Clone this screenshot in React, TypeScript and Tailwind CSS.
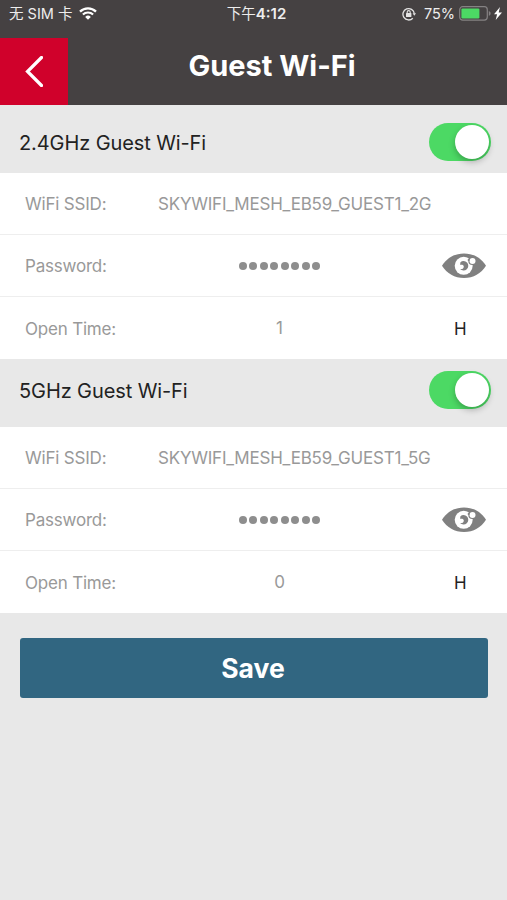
import { ReactNode } from "react";

interface Network {
  title: string;
  ssid: string;
  openTime: string;
  headerPadding: string;
}

const networks: Network[] = [
  {
    title: "2.4GHz Guest Wi-Fi",
    ssid: "SKYWIFI_MESH_EB59_GUEST1_2G",
    openTime: "1",
    headerPadding: "pt-[6px]",
  },
  {
    title: "5GHz Guest Wi-Fi",
    ssid: "SKYWIFI_MESH_EB59_GUEST1_5G",
    openTime: "0",
    headerPadding: "pb-[6px]",
  },
];

function WifiIcon() {
  return (
    <svg width="18" height="13" viewBox="0 0 18 13" fill="none" stroke="#fff">
      <path d="M1 4.6a11.4 11.4 0 0 1 16 0" strokeWidth="2.3" />
      <path d="M3.9 7.6a7.2 7.2 0 0 1 10.2 0" strokeWidth="2.1" />
      <path d="M9 12.8 6.2 9.9a4 4 0 0 1 5.6 0z" fill="#fff" stroke="none" />
    </svg>
  );
}

function RotationLockIcon() {
  return (
    <svg width="14" height="14" viewBox="0 0 14 14" fill="none" stroke="#e4e3e3">
      <path d="M10.8 11.2A5.7 5.7 0 1 1 12.3 6.5" strokeWidth="1.3" />
      <path d="M10.6 6.2H14l-1.7 2.6z" fill="#e4e3e3" stroke="none" />
      <rect x="4" y="6" width="5.4" height="4" rx="0.5" fill="#e4e3e3" stroke="none" />
      <path d="M5.2 6.5V5.1a1.5 1.5 0 0 1 3 0v1.4" strokeWidth="1.1" />
    </svg>
  );
}

function BatteryIcon() {
  return (
    <svg width="32" height="15" viewBox="0 0 32 15">
      <rect x="0.7" y="0.7" width="27.6" height="13.4" rx="3" fill="none" stroke="#858283" strokeWidth="1.2" />
      <rect x="2.4" y="2.4" width="18" height="10" rx="1.2" fill="#4cd964" />
      <path d="M29.8 5v4.8c1.1-.4 1.8-1.3 1.8-2.4s-.7-2-1.8-2.4z" fill="#858283" />
    </svg>
  );
}

function BoltIcon() {
  return (
    <svg width="8" height="13" viewBox="0 0 8 13">
      <path d="M6 0 0 7.2h3.1L1.7 13 8 5.5H4.7z" fill="#fff" />
    </svg>
  );
}

function EyeIcon() {
  return (
    <svg width="44" height="26" viewBox="0 0 44 26">
      <path d="M0 12.7C5 5 12.500.4 22 .4S39 5 44 12.700C39 20.400 31.500 25 22 25S5 20.400 0 12.700z" fill="#808080" />
      <circle cx="21.7" cy="12.8" r="9" fill="#fff" />
      <circle cx="30.3" cy="7.9" r="4" fill="#808080" />
      <circle cx="30.5" cy="7.9" r="3" fill="#fff" />
      <circle cx="26.6" cy="7" r="1" fill="#808080" />
      <path d="M18.3 9.4a4.7 4.7 0 1 1-.2 6.5c1.700.6 3.800-.4 3.700-2.400-.1-1.600-1.900-2.200-3.600-1.600z" fill="#808080" />
    </svg>
  );
}

function StatusBar() {
  return (
    <div className="flex h-[27px] items-center justify-between pl-[9px] pr-[5px] text-[14.5px] leading-none text-[#eeeded]">
      <div className="flex w-[170px] items-center gap-[7px]">
        <span className="whitespace-nowrap pt-px">无 SIM 卡</span>
        <WifiIcon />
      </div>
      <span className="pl-[2px]">
        下午<span className="text-[15px] font-semibold">4:12</span>
      </span>
      <div className="flex w-[170px] items-center justify-end">
        <RotationLockIcon />
        <span className="ml-2 mr-1 pt-px">75%</span>
        <BatteryIcon />
        <span className="ml-[3px]">
          <BoltIcon />
        </span>
      </div>
    </div>
  );
}

function Toggle() {
  return (
    <div className="flex h-[38px] w-[62px] items-center justify-end rounded-full bg-[#4cd964] pr-[2px]">
      <div className="size-[34px] rounded-full bg-white shadow-[0_3px_6px_rgba(0,0,0,0.25)]" />
    </div>
  );
}

function Row({
  label,
  children,
  action,
}: {
  label: string;
  children: ReactNode;
  action?: ReactNode;
}) {
  return (
    <div className="flex h-[62px] items-center border-b border-[#eeeeee] pl-[25px] text-[17px] text-[#999999] last:border-b-0">
      <span className="w-[133px] pt-[3px] tracking-[-0.2px]">{label}</span>
      <div className="flex w-[243px] justify-center whitespace-nowrap">{children}</div>
      {action}
    </div>
  );
}

function NetworkSection({ network }: { network: Network }) {
  return (
    <section>
      <div
        className={`flex h-[68px] items-center justify-between pl-[19px] pr-4 ${network.headerPadding}`}
      >
        <h2 className="pt-px text-[20px] tracking-[-0.1px] text-[#222222]">{network.title}</h2>
        <Toggle />
      </div>
      <div className="bg-white">
        <Row label="WiFi SSID:">
          <span className="w-full pt-[2px] tracking-[-0.22px]">{network.ssid}</span>
        </Row>
        <Row
          label="Password:"
          action={
            <span className="ml-[41px]">
              <EyeIcon />
            </span>
          }
        >
          <div className="flex gap-[2.5px]">
            {Array.from({ length: 8 }, (_, i) => (
              <span key={i} className="size-2 rounded-full bg-[#8e8e8e]" />
            ))}
          </div>
        </Row>
        <Row
          label="Open Time:"
          action={<span className="ml-[53px] pt-[3px] text-[#222222]">H</span>}
        >
          <span className="pt-[2px]">{network.openTime}</span>
        </Row>
      </div>
    </section>
  );
}

export default function App() {
  return (
    <div className="min-h-screen bg-[#e8e8e8] font-['Inter','Noto_Sans_CJK_SC',sans-serif]">
      <header className="h-[105px] bg-[#454142]">
        <StatusBar />
        <div className="flex h-[78px] items-end">
          <button className="flex h-[67px] w-[68px] items-center justify-center bg-[#d0012b]">
            <svg width="18" height="31" viewBox="0 0 18 31" fill="none" stroke="#fff" strokeWidth="3.2">
              <path d="M16.5 1.5 2.5 15.5l14 14" strokeLinecap="round" />
            </svg>
          </button>
          <h1 className="mb-[18px] flex-1 pr-[31px] text-center text-[29px] font-bold text-white">
            Guest Wi-Fi
          </h1>
        </div>
      </header>
      {networks.map((network) => (
        <NetworkSection key={network.title} network={network} />
      ))}
      <div className="px-5 pt-[25px]">
        <button className="h-[60px] w-[468px] rounded-[3px] bg-[#316681] pr-[2px] pt-[2px] text-[26.5px] font-bold text-white">
          Save
        </button>
      </div>
    </div>
  );
}
